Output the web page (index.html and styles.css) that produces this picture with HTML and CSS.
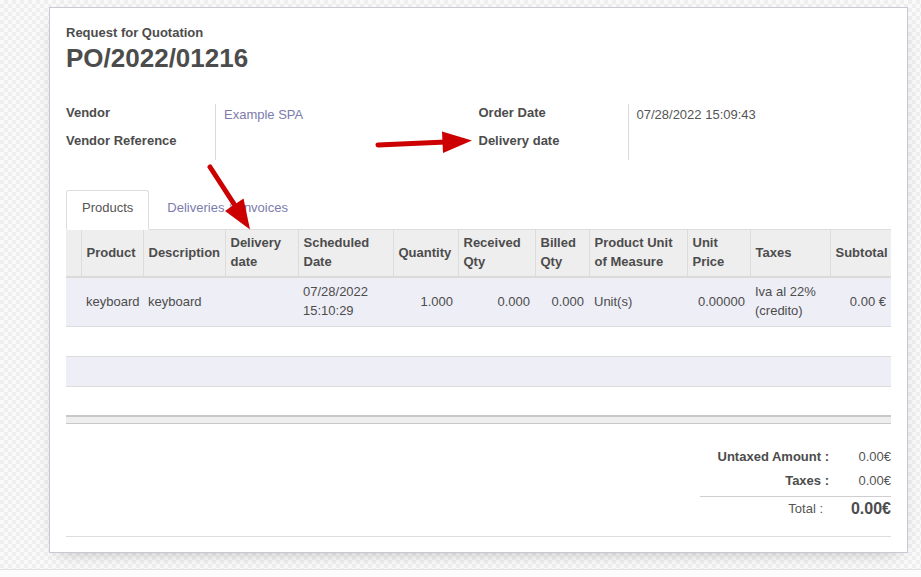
FILE: index.html
```html
<!DOCTYPE html>
<html>
<head>
<meta charset="utf-8">
<title>PO/2022/01216</title>
<link rel="stylesheet" href="styles.css">
</head>
<body>
<div class="view">
  <div class="sheet">
    <div class="subtitle">Request for Quotation</div>
    <h1 class="title">PO/2022/01216</h1>
    <div class="groups">
      <div class="group">
        <div class="lbl">Vendor</div><div class="val"><span class="link">Example SPA</span></div>
        <div class="lbl">Vendor Reference</div><div class="val"></div>
      </div>
      <div class="group">
        <div class="lbl">Order Date</div><div class="val">07/28/2022 15:09:43</div>
        <div class="lbl">Delivery date</div><div class="val"></div>
      </div>
    </div>
    <div class="tabs">
      <div class="tab active">Products</div>
      <div class="tab">Deliveries &amp; Invoices</div>
    </div>
    <table class="lines">
      <colgroup>
        <col class="c-handle"><col class="c-product"><col class="c-desc"><col class="c-ddate"><col class="c-sdate"><col class="c-qty"><col class="c-recv"><col class="c-billed"><col class="c-uom"><col class="c-price"><col class="c-taxes"><col class="c-sub">
      </colgroup>
      <thead>
        <tr>
          <th class="handle"></th>
          <th>Product</th>
          <th>Description</th>
          <th>Delivery date</th>
          <th>Scheduled Date</th>
          <th>Quantity</th>
          <th>Received Qty</th>
          <th>Billed Qty</th>
          <th>Product Unit of Measure</th>
          <th>Unit Price</th>
          <th>Taxes</th>
          <th>Subtotal</th>
        </tr>
      </thead>
      <tbody>
        <tr class="odd">
          <td></td>
          <td>keyboard</td>
          <td>keyboard</td>
          <td></td>
          <td>07/28/2022 15:10:29</td>
          <td class="num">1.000</td>
          <td class="num">0.000</td>
          <td class="num">0.000</td>
          <td>Unit(s)</td>
          <td class="num">0.00000</td>
          <td>Iva al 22% (credito)</td>
          <td class="num">0.00&nbsp;€</td>
        </tr>
        <tr class="empty"><td colspan="12"></td></tr>
        <tr class="empty odd"><td colspan="12"></td></tr>
        <tr class="empty last"><td colspan="12"></td></tr>
      </tbody>
      <tfoot>
        <tr><td colspan="12"></td></tr>
      </tfoot>
    </table>
    <div class="totals">
      <div class="t-lbl">Untaxed Amount :</div><div class="t-val">0.00€</div>
      <div class="t-lbl">Taxes :</div><div class="t-val">0.00€</div>
      <div class="t-lbl total">Total :</div><div class="t-val total">0.00€</div>
    </div>
    <div class="notes-sep"></div>
  </div>
</div>
<div class="statusbar"></div>
<svg class="annot" width="921" height="577" viewBox="0 0 921 577">
  <line x1="378" y1="145" x2="446" y2="142" stroke="#cc0000" stroke-width="5" stroke-linecap="round"/>
  <polygon points="442,131.5 443,153 472,140.5" fill="#cc0000"/>
  <line x1="210" y1="167" x2="236" y2="207" stroke="#cc0000" stroke-width="5" stroke-linecap="round"/>
  <polygon points="225,211 243.5,198.5 250,229.5" fill="#cc0000"/>
</svg>
</body>
</html>
```

FILE: styles.css
```css
html, body {
  margin: 0;
  padding: 0;
}

body {
  width: 921px;
  height: 577px;
  overflow: hidden;
  font-family: "Liberation Sans", Arial, sans-serif;
  font-size: 13px;
  line-height: 18px;
  color: #4c4c4c;
  background-color: #f7f7f7;
  background-image: repeating-conic-gradient(#efefef 0 25%, #fafafa 0 50%);
  background-size: 8px 8px;
  position: relative;
}

.view {
  padding: 7px 0 0 49px;
}

.sheet {
  box-sizing: border-box;
  width: 859px;
  height: 546px;
  background: #ffffff;
  border: 1px solid #c9c8d4;
  box-shadow: 0 6px 18px -10px rgba(0, 0, 0, 0.35);
  padding: 16px 16px 0 16px;
}

.subtitle {
  font-weight: bold;
  line-height: 18px;
}

.title {
  margin: 0;
  font-size: 26px;
  line-height: 32px;
  font-weight: bold;
  color: #4c4c4c;
}

.groups {
  display: flex;
  margin-top: 30px;
}

.group {
  flex: 1 1 0;
  display: grid;
  grid-template-columns: 150px 1fr;
  grid-auto-rows: 28px;
}

.lbl {
  box-sizing: border-box;
  font-weight: bold;
  border-right: 1px solid #d9d9d9;
}

.val {
  padding: 2px 0 0 8px;
  color: #555;
}

.link {
  color: #7c7bad;
}

.tabs {
  display: flex;
  margin-top: 30px;
  border-bottom: 1px solid #dddddd;
}

.tab {
  border: 1px solid transparent;
  border-radius: 3px 3px 0 0;
  padding: 8px 15px 12px 15px;
  margin-right: 2px;
  margin-bottom: -1px;
  color: #7c7bad;
  line-height: 18px;
}

.tab.active {
  color: #555;
  background: #fff;
  border-color: #dddddd #dddddd #ffffff;
}

.lines {
  width: 825px;
  table-layout: fixed;
  border-collapse: collapse;
  border-spacing: 0;
}

.c-handle { width: 15px; }
.c-product { width: 62px; }
.c-desc { width: 82px; }
.c-ddate { width: 73px; }
.c-sdate { width: 95px; }
.c-qty { width: 65px; }
.c-recv { width: 77px; }
.c-billed { width: 54px; }
.c-uom { width: 98px; }
.c-price { width: 63px; }
.c-taxes { width: 80px; }
.c-sub { width: 61px; }

.lines th {
  background: #eeeeee;
  text-align: left;
  font-weight: bold;
  vertical-align: middle;
  padding: 3px 5px 5px 5px;
  line-height: 19px;
  border-left: 1px solid #dcdcdc;
  border-bottom: 2px solid #dadada;
  white-space: normal;
}

.lines th.handle {
  border-left: none;
}

.lines td {
  padding: 4px 5px 6px 5px;
  line-height: 19px;
  vertical-align: middle;
  text-align: left;
  border-bottom: 1px solid #dcdcdc;
}

.lines td.num {
  text-align: right;
}

.lines tr.odd td {
  background: #eeeef6;
}

.lines tr.empty td {
  height: 30px;
  padding: 0;
  box-sizing: border-box;
}

.lines tr.empty.last td {
  height: 29px;
  border-bottom: none;
}

.lines tfoot td {
  height: 6px;
  padding: 0;
  background: #eeeeee;
  border-top: 2px solid #c8c8c8;
  border-bottom: 1px solid #c8c8c8;
}

.totals {
  display: grid;
  grid-template-columns: 129px 62px;
  grid-auto-rows: 24px;
  width: 191px;
  margin: 21px 0 0 auto;
  line-height: 24px;
}

.t-lbl {
  text-align: right;
  font-weight: bold;
  padding-right: 0;
}

.t-val {
  text-align: right;
  color: #555;
}

.t-lbl.total,
.t-val.total {
  border-top: 1px solid #cfcfcf;
  margin-top: 3px;
  padding-top: 1px;
  line-height: 22px;
  height: 24px;
}

.t-lbl.total {
  font-weight: normal;
  color: #555;
  padding-right: 6px;
}

.t-val.total {
  font-size: 16px;
  font-weight: bold;
  color: #4c4c4c;
}

.notes-sep {
  margin-top: 19px;
  border-top: 1px solid #dddddd;
}

.statusbar {
  margin-top: 16px;
  height: 7px;
  border-top: 1px solid #e2e2e2;
  background: #fcfcfc;
}

.annot {
  position: absolute;
  left: 0;
  top: 0;
  pointer-events: none;
}
```
